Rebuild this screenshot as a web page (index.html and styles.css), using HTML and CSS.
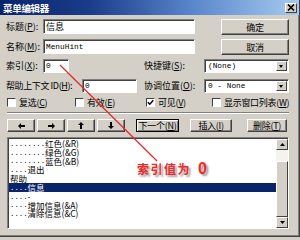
FILE: index.html
```html
<!DOCTYPE html>
<html lang="zh">
<head>
  <meta charset="UTF-8">
  <title>菜单编辑器</title>
  <link rel="stylesheet" href="styles.css">
</head>
<body>

  <div class="window">
    <div class="titlebar">
      <span>菜单编辑器</span>
      <span class="close">
        <svg width="8" height="7" viewBox="0 0 8 7"><path d="M1 0.5 L7 6.5 M7 0.5 L1 6.5" stroke="#000" stroke-width="1.6"/></svg>
      </span>
    </div>

    <div class="content">
      <div class="top">
        <div class="fields">
          <div class="row">
            <span class="lbl w37">标题(<u>P</u>):</span>
            <div class="field name">信息</div>
          </div>
          <div class="row r2">
            <span class="lbl w37">名称(<u>M</u>):</span>
            <div class="field name mono">MenuHint</div>
          </div>
        </div>
        <div class="btns">
          <button class="btn big">确定</button>
          <button class="btn big">取消</button>
        </div>
      </div>

      <div class="row r3">
        <span class="lbl w37">索引(<u>X</u>):</span>
        <div class="field index mono">0</div>
        <span class="lbl w60 gapl">快捷键(<u>S</u>):</span>
        <div class="combo"><span class="mono">(None)</span><span class="drop"></span></div>
      </div>

      <div class="row r4">
        <span class="lbl w76">帮助上下文 ID(<u>H</u>):</span>
        <div class="field help mono">0</div>
        <span class="lbl w60 gaps">协调位置(<u>O</u>):</span>
        <div class="combo"><span class="mono">0 - None</span><span class="drop"></span></div>
      </div>

      <div class="checks">
        <span class="check c1"><i class="box"></i><span>复选(<u>C</u>)</span></span>
        <span class="check c2"><i class="box"></i><span>有效(<u>E</u>)</span></span>
        <span class="check c3"><i class="box"><svg width="7" height="7" viewBox="0 0 7 7"><path d="M0.8 3.2 L2.8 5.3 L6.3 1.2" stroke="#000" stroke-width="1.4" fill="none"/></svg></i><span>可见(<u>V</u>)</span></span>
        <span class="check c4"><i class="box"></i><span>显示窗口列表(<u>W</u>)</span></span>
      </div>

      <div class="sep"></div>

      <div class="toolbar">
        <button class="btn arrow"><svg width="7" height="6" viewBox="0 0 7 6"><path d="M0 3 L3 0 L3 2 L7 2 L7 4 L3 4 L3 6 Z"/></svg></button>
        <button class="btn arrow"><svg width="7" height="6" viewBox="0 0 7 6"><path d="M7 3 L4 0 L4 2 L0 2 L0 4 L4 4 L4 6 Z"/></svg></button>
        <button class="btn arrow"><svg width="6" height="7" viewBox="0 0 6 7"><path d="M3 0 L6 3 L4 3 L4 7 L2 7 L2 3 L0 3 Z"/></svg></button>
        <button class="btn arrow"><svg width="6" height="7" viewBox="0 0 6 7"><path d="M3 7 L6 4 L4 4 L4 0 L2 0 L2 4 L0 4 Z"/></svg></button>
        <button class="btn next"><span>下一个(<u>N</u>)</span></button>
        <button class="btn insert"><span>插入(<u>I</u>)</span></button>
        <button class="btn delete"><span>删除(<u>T</u>)</span></button>
      </div>

      <div class="listbox">
        <div class="items">
          <div class="item"><span class="dots">........</span><span>红色(&amp;R)</span></div>
          <div class="item"><span class="dots">........</span><span>绿色(&amp;G)</span></div>
          <div class="item"><span class="dots">........</span><span>蓝色(&amp;B)</span></div>
          <div class="item"><span class="dots">....</span><span>退出</span></div>
          <div class="item"><span>帮助</span></div>
          <div class="item selected"><span class="dots">....</span><span>信息</span></div>
          <div class="item"><span class="dots">....</span><span>-</span></div>
          <div class="item"><span class="dots">....</span><span>增加信息(&amp;A)</span></div>
          <div class="item"><span class="dots">....</span><span>清除信息(&amp;C)</span></div>
        </div>
        <div class="scrollbar">
          <div class="sb-btn"><svg width="5" height="3" viewBox="0 0 5 3"><path d="M2.5 0 L5 3 L0 3 Z" fill="#000"/></svg></div>
          <div class="sb-track"></div>
          <div class="sb-thumb"></div>
          <div class="sb-btn"><svg width="5" height="3" viewBox="0 0 5 3"><path d="M0 0 L5 0 L2.5 3 Z" fill="#000"/></svg></div>
        </div>
      </div>
    </div>

    <!-- red annotation drawn over the dialog -->
    <svg class="note-line" width="300" height="240"><line x1="60" y1="65" x2="157" y2="161" stroke="#e82424" stroke-width="1.2"/></svg>
    <div class="note-text">索引值为<span class="zero">0</span></div>
  </div>

</body>
</html>
```

FILE: styles.css
```css
* {
  box-sizing: border-box;
}

body {
  margin: 0;
  width: 300px;
  height: 240px;
  overflow: hidden;
  background: #d4d0c8;
  color: #000;
  font-family: "Noto Sans CJK SC", "Noto Sans", sans-serif;
  font-size: 9px;
}

u {
  text-decoration: underline;
}

.window {
  position: relative;
  width: 300px;
  height: 237px;
  border-right: 1px solid #404040;
  border-bottom: 1px solid #404040;
  box-shadow: inset -1px -1px #808080;
}

.titlebar {
  height: 15px;
  display: flex;
  align-items: center;
  justify-content: space-between;
  padding: 0 2px 0 3px;
  background: linear-gradient(90deg, #0a246a 0%, #1a3c8a 30%, #5a88cc 65%, #a6caf0 100%);
  color: #fff;
  font-weight: bold;
  font-size: 9.5px;
  letter-spacing: -0.3px;
}

.close {
  width: 12px;
  height: 10px;
  display: flex;
  align-items: center;
  justify-content: center;
  background: #d4d0c8;
  border: 1px solid;
  border-color: #fff #404040 #404040 #fff;
}

.content {
  padding: 4px 0 0 6px;
}

.top {
  display: flex;
}

.fields {
  width: 189px;
}

.row {
  display: flex;
  align-items: center;
  height: 15px;
  white-space: nowrap;
}

.r2 {
  margin-top: 5px;
}

.r3 {
  margin-top: 4px;
  height: 14px;
}

.r4 {
  margin-top: 6px;
  height: 14px;
}

.lbl {
  flex: none;
  line-height: 12px;
}

.w37 { width: 37px; }
.w60 { width: 60px; }
.w76 { width: 76px; letter-spacing: -0.4px; }

.gapl { margin-left: 75px; }
.gaps { margin-left: 7px; }

.field {
  height: 100%;
  background: #fff;
  border: 1px solid;
  border-color: #808080 #fff #fff #808080;
  box-shadow: inset 1px 1px #404040;
  padding: 0 0 0 2px;
  display: flex;
  align-items: center;
}

.name { width: 152px; }
.index { width: 26px; }
.help { width: 55px; }

.mono {
  font-family: "Liberation Mono", monospace;
  font-size: 7.8px;
}

.btns {
  margin-left: 26px;
  display: flex;
  flex-direction: column;
  gap: 4px;
}

.btn {
  margin: 0;
  padding: 0;
  background: #d4d0c8;
  border: 1px solid;
  border-color: #fff #404040 #404040 #fff;
  box-shadow: inset -1px -1px #808080;
  font-family: inherit;
  font-size: 9px;
  line-height: 11px;
  letter-spacing: -0.3px;
  color: #000;
  display: flex;
  align-items: center;
  justify-content: center;
  white-space: nowrap;
}

.big {
  width: 68px;
  height: 16px;
}

.combo {
  width: 85px;
  height: 14px;
  background: #fff;
  border: 1px solid;
  border-color: #808080 #fff #fff #808080;
  box-shadow: inset 1px 1px #404040;
  display: flex;
  align-items: center;
  justify-content: space-between;
  padding: 0 1px 0 3px;
}

.drop {
  width: 11px;
  height: 10px;
  background: #d4d0c8;
  border: 1px solid;
  border-color: #fff #404040 #404040 #fff;
  position: relative;
}

.drop::after {
  content: "";
  position: absolute;
  left: 2px;
  top: 3px;
  border-left: 2.5px solid transparent;
  border-right: 2.5px solid transparent;
  border-top: 3px solid #000;
}

.checks {
  margin-top: 5px;
  height: 9px;
  display: flex;
  align-items: center;
  white-space: nowrap;
  letter-spacing: -0.3px;
}

.check {
  display: flex;
  align-items: center;
  gap: 3px;
  line-height: 11px;
}

.c1 { margin-left: 1px; width: 68px; }
.c2 { width: 71px; }
.c3 { width: 66px; }

.box {
  width: 9px;
  height: 9px;
  flex: none;
  background: #fff;
  border: 1px solid;
  border-color: #404040 #fff #fff #404040;
  display: flex;
  align-items: center;
  justify-content: center;
}

.sep {
  margin: 5px 0 0 1px;
  width: 282px;
  height: 2px;
  border-top: 1px solid #808080;
  border-bottom: 1px solid #fff;
}

.toolbar {
  margin: 5px 0 0 1px;
  height: 13px;
  display: flex;
}

.arrow {
  width: 28px;
  height: 13px;
  margin-right: 2px;
}

.next {
  width: 43px;
  height: 13px;
  margin-left: 9px;
  border: 1px solid #000;
  box-shadow: inset 1px 1px #fff, inset -1px -1px #808080;
}

.insert {
  width: 42px;
  height: 13px;
  margin-left: 11px;
}

.delete {
  width: 40px;
  height: 13px;
  margin-left: 15px;
}

.listbox {
  margin: 5px 0 0 1px;
  width: 282px;
  height: 92px;
  background: #fff;
  border: 1px solid;
  border-color: #808080 #fff #fff #808080;
  box-shadow: inset 1px 1px #404040;
  padding: 1px 0 0 1px;
  display: flex;
}

.items {
  flex: 1;
}

.item {
  height: 8.8px;
  display: flex;
  align-items: center;
  font-size: 8.5px;
  line-height: 8.8px;
  white-space: nowrap;
  padding-left: 1px;
}

.dots {
  font-family: "Liberation Mono", monospace;
  font-size: 7.3px;
  align-self: flex-end;
  line-height: 7px;
}

.selected {
  background: #0a246a;
  color: #fff;
}

.scrollbar {
  width: 12px;
  display: flex;
  flex-direction: column;
}

.sb-btn {
  height: 11px;
  background: #d4d0c8;
  border: 1px solid;
  border-color: #fff #404040 #404040 #fff;
  display: flex;
  align-items: center;
  justify-content: center;
}

.sb-track {
  height: 11px;
  background: #f4f3ef;
}

.sb-thumb {
  flex: 1;
  background: #d4d0c8;
  border: 1px solid;
  border-color: #fff #404040 #404040 #fff;
}

.note-line {
  position: absolute;
  left: 0;
  top: 0;
  pointer-events: none;
}

.note-text {
  position: absolute;
  left: 137px;
  top: 160px;
  color: #ee2a2a;
  font-weight: bold;
  font-size: 12px;
  letter-spacing: 1.5px;
  white-space: nowrap;
  text-shadow: 2px 2px 2px #999;
}

.zero {
  margin-left: 7px;
  font-family: "Liberation Sans", sans-serif;
  font-size: 16px;
}
```
